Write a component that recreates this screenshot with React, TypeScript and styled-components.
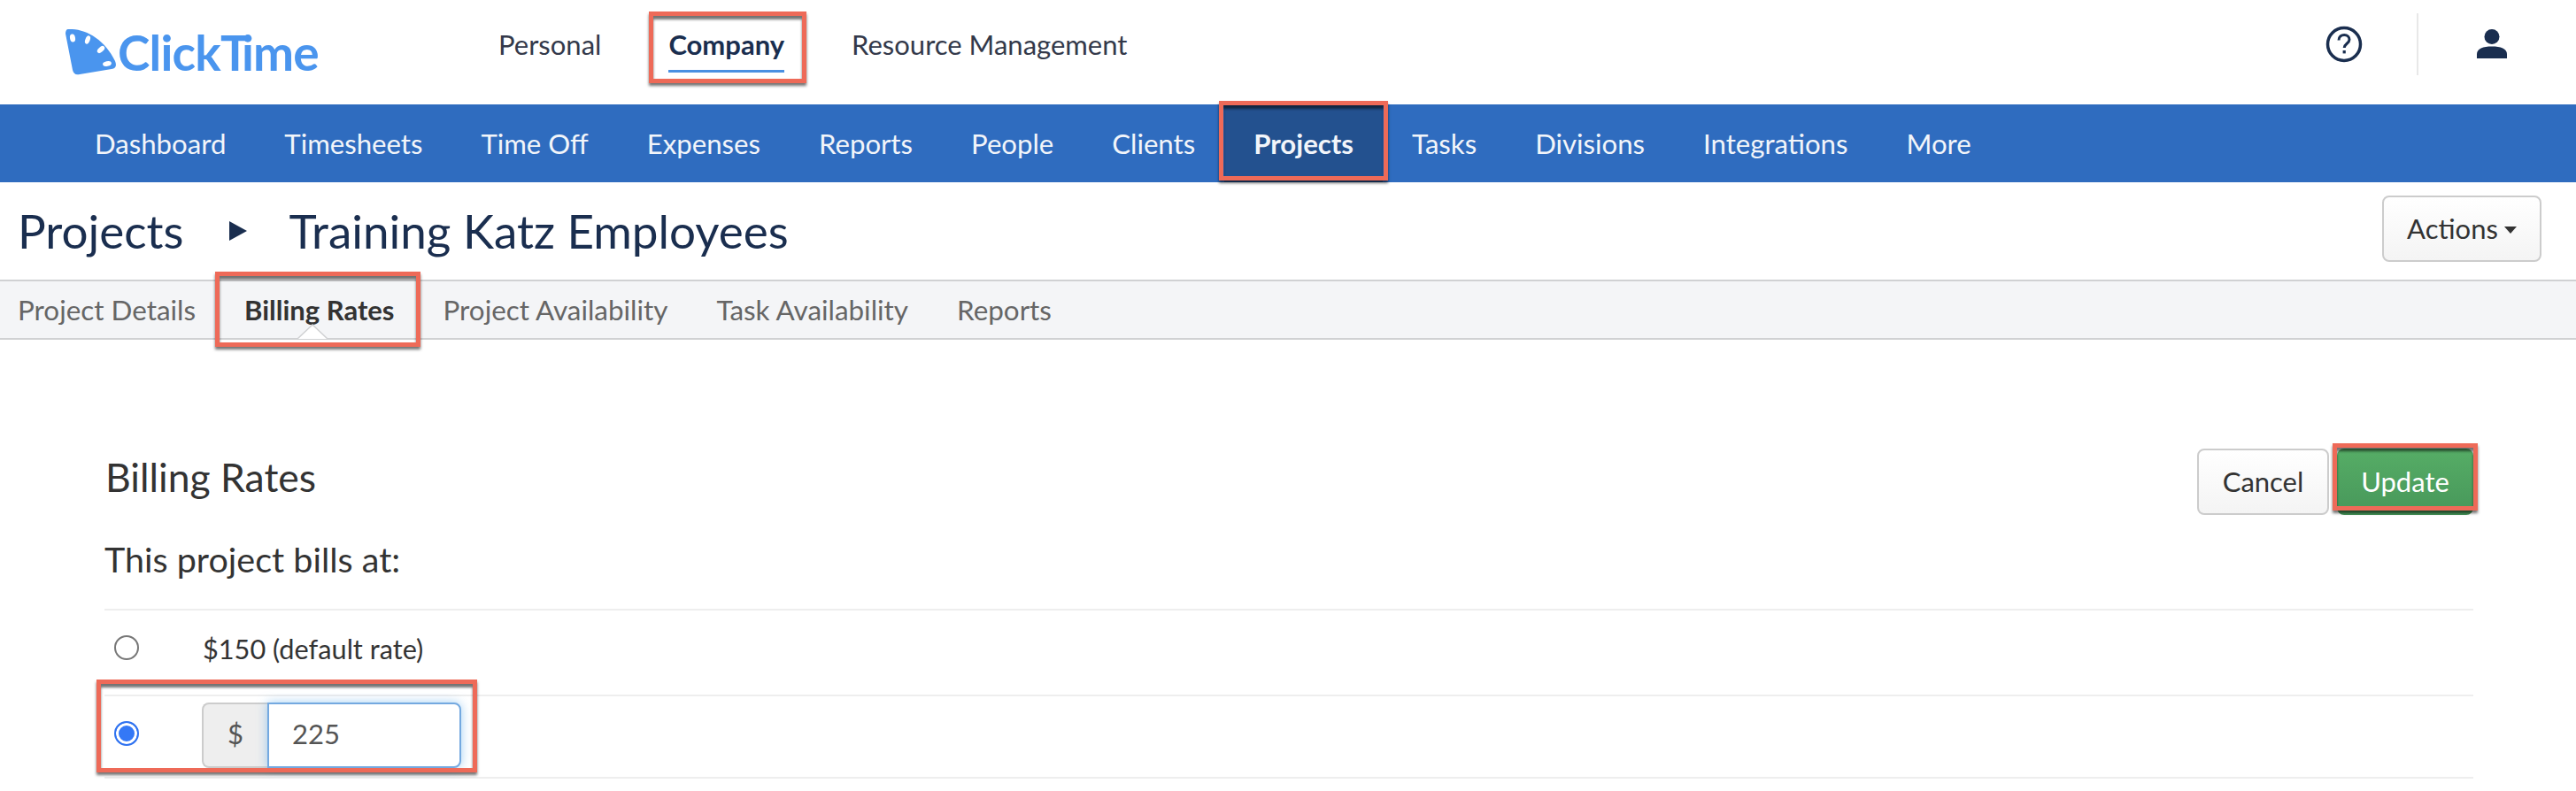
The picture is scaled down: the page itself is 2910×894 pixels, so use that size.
import React from "react";
import styled, { createGlobalStyle } from "styled-components";

const Global = createGlobalStyle`
  html, body { margin: 0; padding: 0; background: #fff; }
  body { font-family: Lato, "Liberation Sans", sans-serif; }
  * { box-sizing: border-box; }
`;

const Page = styled.div`
  width: 2910px;
  height: 894px;
  overflow: hidden;
  background: #fff;
`;

const Callout = styled.span<{ $t: number; $r: number; $b: number; $l: number }>`
  position: absolute;
  top: ${(p) => p.$t}px;
  right: ${(p) => p.$r}px;
  bottom: ${(p) => p.$b}px;
  left: ${(p) => p.$l}px;
  border: 5px solid #ee6a58;
  box-shadow: 0 3px 3px rgba(0, 0, 0, 0.55), inset 0 4px 3px rgba(0, 0, 0, 0.55);
  pointer-events: none;
`;

const TopBar = styled.header`
  height: 118px;
  display: flex;
  align-items: center;
  padding-left: 74px;
`;

const Logo = styled.div`
  width: 489px;
  display: flex;
  align-items: center;
  color: #4a95ee;
  font-size: 55px;
  font-weight: 700;
  letter-spacing: -0.8px;
  line-height: 1;
`;

const LogoMark = styled.svg`
  width: 58px;
  height: 52px;
  margin-right: 1px;
  flex: none;
`;

const LogoTee = styled.span`
  letter-spacing: -9px;
`;

const TopNav = styled.nav`
  display: flex;
  gap: 76px;
  margin-top: -18px;
`;

const TopLink = styled.a<{ $active?: boolean }>`
  position: relative;
  font-size: 31px;
  line-height: 40px;
  color: ${(p) => (p.$active ? "#1a2e4f" : "#33394a")};
  font-weight: ${(p) => (p.$active ? 700 : 400)};
`;

const TopUnderline = styled.span`
  position: absolute;
  left: 0;
  right: 0;
  top: 49px;
  height: 3px;
  background: #4a90e2;
`;

const TopRight = styled.div`
  margin-left: auto;
  display: flex;
  align-items: center;
  height: 70px;
  margin-top: -18px;
  padding-right: 77px;
`;

const HelpIcon = styled.svg`
  width: 42px;
  height: 42px;
`;

const TopDivider = styled.span`
  width: 2px;
  height: 70px;
  background: #e8e8e8;
  margin: 0 65px 0 61px;
`;

const UserIcon = styled.svg`
  width: 36px;
  height: 34px;
`;

const MainNav = styled.nav`
  height: 88px;
  background: #2f6cbf;
  display: flex;
  padding-left: 74px;
`;

const MainLink = styled.a<{ $active?: boolean }>`
  position: relative;
  display: flex;
  align-items: center;
  padding: 0 33px;
  font-size: 31.15px;
  color: #f2f5fa;
  font-weight: ${(p) => (p.$active ? 700 : 400)};
  background: ${(p) => (p.$active ? "#23518f" : "transparent")};
`;

const TitleRow = styled.div`
  height: 110px;
  display: flex;
  align-items: center;
  padding: 0 39px 0 20px;
  color: #1a2e4f;
`;

const Crumb = styled.h1`
  margin: -2px 0 0;
  font-size: 53px;
  font-weight: 400;
  line-height: 1;
`;

const CrumbArrow = styled.span`
  width: 0;
  height: 0;
  margin: 0 48px 0 51px;
  border-left: 20px solid #1a2e4f;
  border-top: 11px solid transparent;
  border-bottom: 11px solid transparent;
`;

const Button = styled.button<{ $primary?: boolean }>`
  position: relative;
  height: 75px;
  font-family: inherit;
  font-size: 31px;
  border-radius: 8px;
  padding: 0 0 2px;
  color: ${(p) => (p.$primary ? "#fff" : "#333")};
  border: ${(p) => (p.$primary ? "0" : "2px solid #ccc")};
  background: ${(p) =>
    p.$primary ? "linear-gradient(#56ad66, #47975a)" : "linear-gradient(#fff, #f4f4f4)"};
`;

const ActionsButton = styled(Button)`
  width: 180px;
  margin-left: auto;
  margin-top: -5px;
  display: flex;
  align-items: center;
  justify-content: center;
  gap: 7px;
`;

const Caret = styled.span`
  width: 0;
  height: 0;
  margin-top: 4px;
  border-top: 8px solid #333;
  border-left: 7px solid transparent;
  border-right: 7px solid transparent;
`;

const Tabs = styled.div`
  height: 68px;
  display: flex;
  gap: 55px;
  padding-left: 20px;
  background: #f4f5f7;
  border-top: 2px solid #d0d1d3;
  border-bottom: 2px solid #d0d1d3;
`;

const Tab = styled.a<{ $active?: boolean }>`
  position: relative;
  display: flex;
  align-items: center;
  font-size: ${(p) => (p.$active ? 31 : 31.4)}px;
  color: ${(p) => (p.$active ? "#333" : "#666")};
  font-weight: ${(p) => (p.$active ? 700 : 400)};
`;

const TabNotch = styled.svg`
  position: absolute;
  left: 60px;
  bottom: -2px;
  width: 34px;
  height: 18px;
`;

const Content = styled.main`
  padding: 123px 116px 0 118px;
`;

const SectionHead = styled.div`
  height: 75px;
  display: flex;
  align-items: center;
  justify-content: space-between;
`;

const SectionTitle = styled.h2`
  margin: -12px 0 0 1px;
  font-size: 44.5px;
  font-weight: 400;
  color: #333;
`;

const ButtonGroup = styled.div`
  display: flex;
  gap: 9px;
`;

const CancelButton = styled(Button)`
  width: 149px;
`;

const UpdateButton = styled(Button)`
  width: 154px;
`;

const Lead = styled.p`
  margin: 0;
  height: 106px;
  padding-top: 28px;
  font-size: 39.5px;
  line-height: 44px;
  color: #333;
`;

const Row = styled.div<{ $h: number; $inset: number }>`
  position: relative;
  height: ${(p) => p.$h}px;
  display: flex;
  align-items: center;
  padding: 0 0 ${(p) => p.$inset}px 11px;
  border-top: 2px solid #eee;
  &:last-child { border-bottom: 2px solid #eee; }
`;

const Radio = styled.input`
  appearance: none;
  width: 28px;
  height: 28px;
  margin: 0 73px 4px 0;
  border-radius: 50%;
  border: 2px solid #777;
  background: #fff;
  flex: none;
  &:checked {
    border-color: #2f72f0;
    background: #3478f6;
    box-shadow: inset 0 0 0 3px #fff;
  }
`;

const RateText = styled.span`
  font-size: 30.7px;
  margin-left: -1px;
  color: #333;
`;

const InputGroup = styled.div`
  display: flex;
  height: 74px;
  margin-left: -2px;
`;

const Addon = styled.span`
  width: 74px;
  display: flex;
  align-items: center;
  justify-content: center;
  font-size: 31px;
  padding-bottom: 3px;
  color: #555;
  background: #eee;
  border: 2px solid #ccc;
  border-right: 0;
  border-radius: 8px 0 0 8px;
`;

const AmountInput = styled.input`
  width: 219px;
  font-family: inherit;
  font-size: 31px;
  color: #555;
  padding: 0 26px 4px;
  background: #fff;
  border: 2px solid #74a9e0;
  border-radius: 0 8px 8px 0;
  outline: none;
  box-shadow: 0 0 12px rgba(102, 175, 233, 0.6);
`;

const topLinks = ["Personal", "Company", "Resource Management"];
const mainLinks = [
  "Dashboard", "Timesheets", "Time Off", "Expenses", "Reports", "People", "Clients",
  "Projects", "Tasks", "Divisions", "Integrations", "More",
];
const tabs = ["Project Details", "Billing Rates", "Project Availability", "Task Availability", "Reports"];

export default function App() {
  return (
    <Page>
      <Global />
      <TopBar>
        <Logo>
          <LogoMark viewBox="0 0 58 52">
            <path
              d="M3 0 C22 -1 44 11 56 36 C58 41 57 44 52 45 L16 51 C11 52 9 50 8 46 L0 5 C0 2 1 0 3 0 Z"
              fill="#4a95ee"
            />
            <g fill="#fff">
              <ellipse cx="8" cy="10" rx="3" ry="4.5" transform="rotate(-10 8 10)" />
              <ellipse cx="25" cy="12" rx="2.6" ry="4.8" transform="rotate(22 25 12)" />
              <ellipse cx="40" cy="23" rx="2.8" ry="5" transform="rotate(48 40 23)" />
              <ellipse cx="47" cy="39" rx="2.8" ry="5" transform="rotate(78 47 39)" />
            </g>
          </LogoMark>
          <span>
            Click<LogoTee>T</LogoTee>ime
          </span>
        </Logo>
        <TopNav>
          {topLinks.map((l) =>
            l === "Company" ? (
              <TopLink key={l} $active>
                {l}
                <TopUnderline />
                <Callout $t={-17} $r={-25} $b={-24} $l={-22} />
              </TopLink>
            ) : (
              <TopLink key={l}>{l}</TopLink>
            )
          )}
        </TopNav>
        <TopRight>
          <HelpIcon viewBox="0 0 42 42">
            <circle cx="21" cy="21" r="18.5" fill="none" stroke="#1a2e4f" strokeWidth="3.5" />
            <path
              d="M15 16.5 C15 12.5 18 10.5 21.2 10.5 C24.8 10.5 27 12.8 27 15.8 C27 20 21.2 20.5 21.2 25"
              fill="none"
              stroke="#1a2e4f"
              strokeWidth="3"
            />
            <rect x="19.6" y="28" width="3.2" height="3.4" fill="#1a2e4f" />
          </HelpIcon>
          <TopDivider />
          <UserIcon viewBox="0 0 36 34">
            <ellipse cx="18" cy="8.5" rx="8.5" ry="8.5" fill="#1a2e4f" />
            <path d="M1 33 L1 28 C1 22 8 19.5 18 19.5 C28 19.5 35 22 35 28 L35 33 Z" fill="#1a2e4f" />
          </UserIcon>
        </TopRight>
      </TopBar>

      <MainNav>
        {mainLinks.map((l) =>
          l === "Projects" ? (
            <MainLink key={l} $active>
              {l}
              <Callout $t={-4} $r={-6} $b={2} $l={-6} />
            </MainLink>
          ) : (
            <MainLink key={l}>{l}</MainLink>
          )
        )}
      </MainNav>

      <TitleRow>
        <Crumb>Projects</Crumb>
        <CrumbArrow />
        <Crumb>Training Katz Employees</Crumb>
        <ActionsButton>
          Actions
          <Caret />
        </ActionsButton>
      </TitleRow>

      <Tabs>
        {tabs.map((t) =>
          t === "Billing Rates" ? (
            <Tab key={t} $active>
              {t}
              <TabNotch viewBox="0 0 34 18">
                <path d="M0 17 L17 1 L34 17" fill="#fff" stroke="#d0d1d3" strokeWidth="1.5" />
              </TabNotch>
              <Callout $t={-11} $r={-29} $b={-10} $l={-33} />
            </Tab>
          ) : (
            <Tab key={t}>{t}</Tab>
          )
        )}
      </Tabs>

      <Content>
        <SectionHead>
          <SectionTitle>Billing Rates</SectionTitle>
          <ButtonGroup>
            <CancelButton>Cancel</CancelButton>
            <UpdateButton $primary>
              Update
              <Callout $t={-6} $r={-5} $b={5} $l={-5} />
            </UpdateButton>
          </ButtonGroup>
        </SectionHead>
        <Lead>This project bills at:</Lead>
        <Row $h={97} $inset={8}>
          <Radio type="radio" name="rate" readOnly />
          <RateText>$150 (default rate)</RateText>
        </Row>
        <Row $h={95} $inset={4}>
          <Radio type="radio" name="rate" defaultChecked />
          <InputGroup>
            <Addon>$</Addon>
            <AmountInput defaultValue="225" />
          </InputGroup>
          <Callout $t={-19} $r={2255} $b={5} $l={-9} />
        </Row>
      </Content>
    </Page>
  );
}
